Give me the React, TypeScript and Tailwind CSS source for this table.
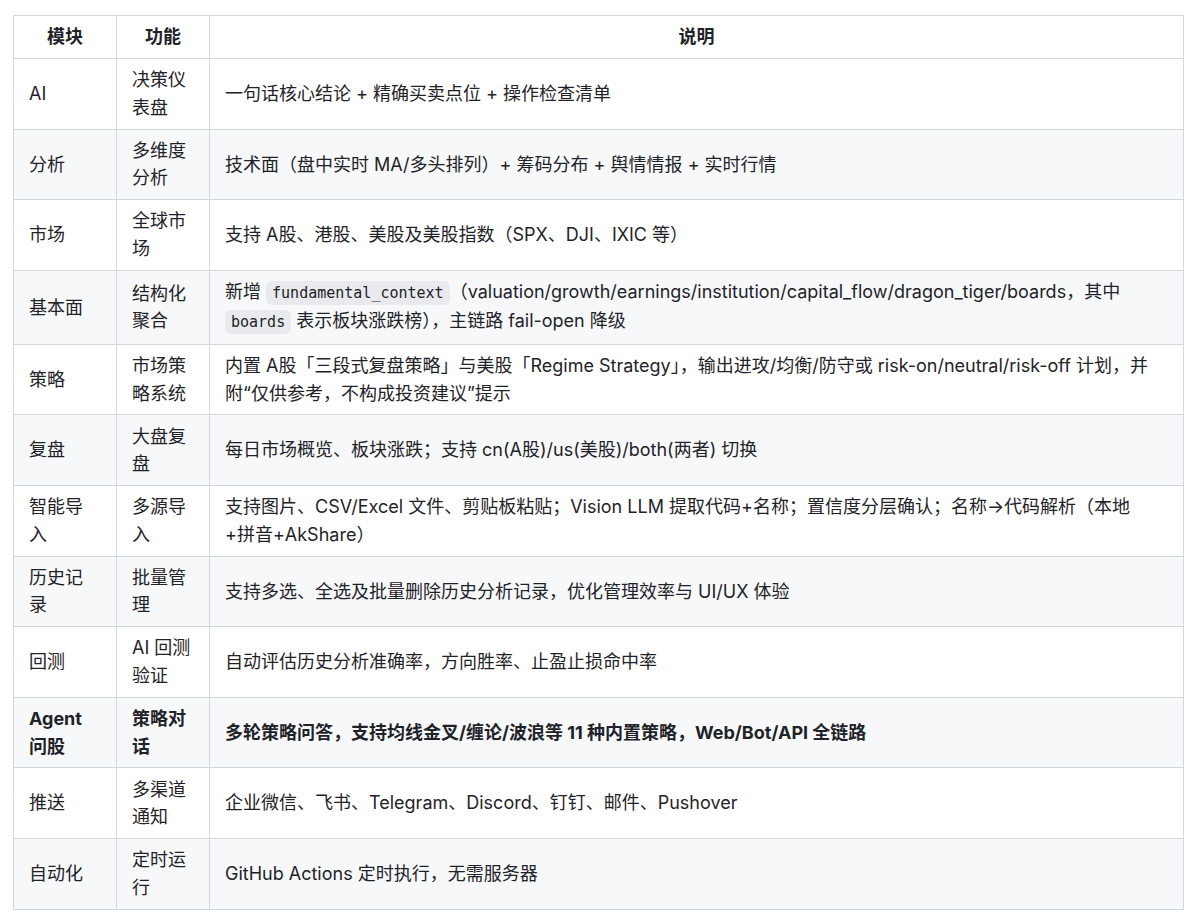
import React from "react";

const Code = ({ children }: { children: React.ReactNode }) => (
  <code className="font-['DejaVu_Sans_Mono','Liberation_Mono',monospace] text-[15px] bg-[#818b981f] rounded-[6px] px-[6px] py-[3px]">
    {children}
  </code>
);

type Row = { a: React.ReactNode; b: React.ReactNode; c: React.ReactNode; bold?: boolean };

const rows: Row[] = [
  { a: "AI", b: <>决策仪<br />表盘</>, c: "一句话核心结论 + 精确买卖点位 + 操作检查清单" },
  { a: "分析", b: <>多维度<br />分析</>, c: "技术面（盘中实时 MA/多头排列）+ 筹码分布 + 舆情情报 + 实时行情" },
  { a: "市场", b: <>全球市<br />场</>, c: "支持 A股、港股、美股及美股指数（SPX、DJI、IXIC 等）" },
  {
    a: "基本面",
    b: <>结构化<br />聚合</>,
    c: (
      <>
        新增 <Code>fundamental_context</Code>（valuation/growth/earnings/institution/capital_flow/dragon_tiger/boards，其中
        <br />
        <Code>boards</Code> 表示板块涨跌榜），主链路 fail-open 降级
      </>
    ),
  },
  {
    a: "策略",
    b: <>市场策<br />略系统</>,
    c: (
      <>
        内置 A股「三段式复盘策略」与美股「Regime Strategy」，输出进攻/均衡/防守或 risk-on/neutral/risk-off 计划，并
        <br />
        附“仅供参考，不构成投资建议”提示
      </>
    ),
  },
  { a: "复盘", b: <>大盘复<br />盘</>, c: "每日市场概览、板块涨跌；支持 cn(A股)/us(美股)/both(两者) 切换" },
  {
    a: <>智能导<br />入</>,
    b: <>多源导<br />入</>,
    c: (
      <>
        支持图片、CSV/Excel 文件、剪贴板粘贴；Vision LLM 提取代码+名称；置信度分层确认；名称→代码解析（本地
        <br />
        +拼音+AkShare）
      </>
    ),
  },
  { a: <>历史记<br />录</>, b: <>批量管<br />理</>, c: "支持多选、全选及批量删除历史分析记录，优化管理效率与 UI/UX 体验" },
  { a: "回测", b: <>AI 回测<br />验证</>, c: "自动评估历史分析准确率，方向胜率、止盈止损命中率" },
  {
    a: <>Agent<br />问股</>,
    b: <>策略对<br />话</>,
    c: "多轮策略问答，支持均线金叉/缠论/波浪等 11 种内置策略，Web/Bot/API 全链路",
    bold: true,
  },
  { a: "推送", b: <>多渠道<br />通知</>, c: "企业微信、飞书、Telegram、Discord、钉钉、邮件、Pushover" },
  { a: "自动化", b: <>定时运<br />行</>, c: "GitHub Actions 定时执行，无需服务器" },
];

export default function App() {
  return (
    <div className="w-[1200px] h-[921px] bg-white pt-[15px] pl-[13px] font-['Inter','Noto_Sans_CJK_SC',sans-serif] text-[#1f2328] text-[18px] leading-[28px]">
      <table className="w-[1171px] table-fixed border-collapse">
        <colgroup>
          <col className="w-[103px]" />
          <col className="w-[93px]" />
          <col />
        </colgroup>
        <thead>
          <tr className="bg-white h-[43px]">
            <th className="border border-[#d1d9e0] px-[15px] py-[7px] font-bold text-center">模块</th>
            <th className="border border-[#d1d9e0] px-[15px] py-[7px] font-bold text-center">功能</th>
            <th className="border border-[#d1d9e0] px-[15px] py-[7px] font-bold text-center">说明</th>
          </tr>
        </thead>
        <tbody className="leading-[27.5px]">
          {rows.map((r, i) => (
            <tr
              key={i}
              className={`h-[70.6px] ${i % 2 === 1 ? "bg-[#f6f8fa]" : "bg-white"} ${r.bold ? "font-bold" : ""}`}
            >
              <td className="border border-[#d1d9e0] px-[15px] py-[7px] align-middle">{r.a}</td>
              <td className="border border-[#d1d9e0] px-[15px] py-[7px] align-middle">{r.b}</td>
              <td className="border border-[#d1d9e0] px-[15px] py-[7px] align-middle whitespace-nowrap">{r.c}</td>
            </tr>
          ))}
        </tbody>
      </table>
    </div>
  );
}
